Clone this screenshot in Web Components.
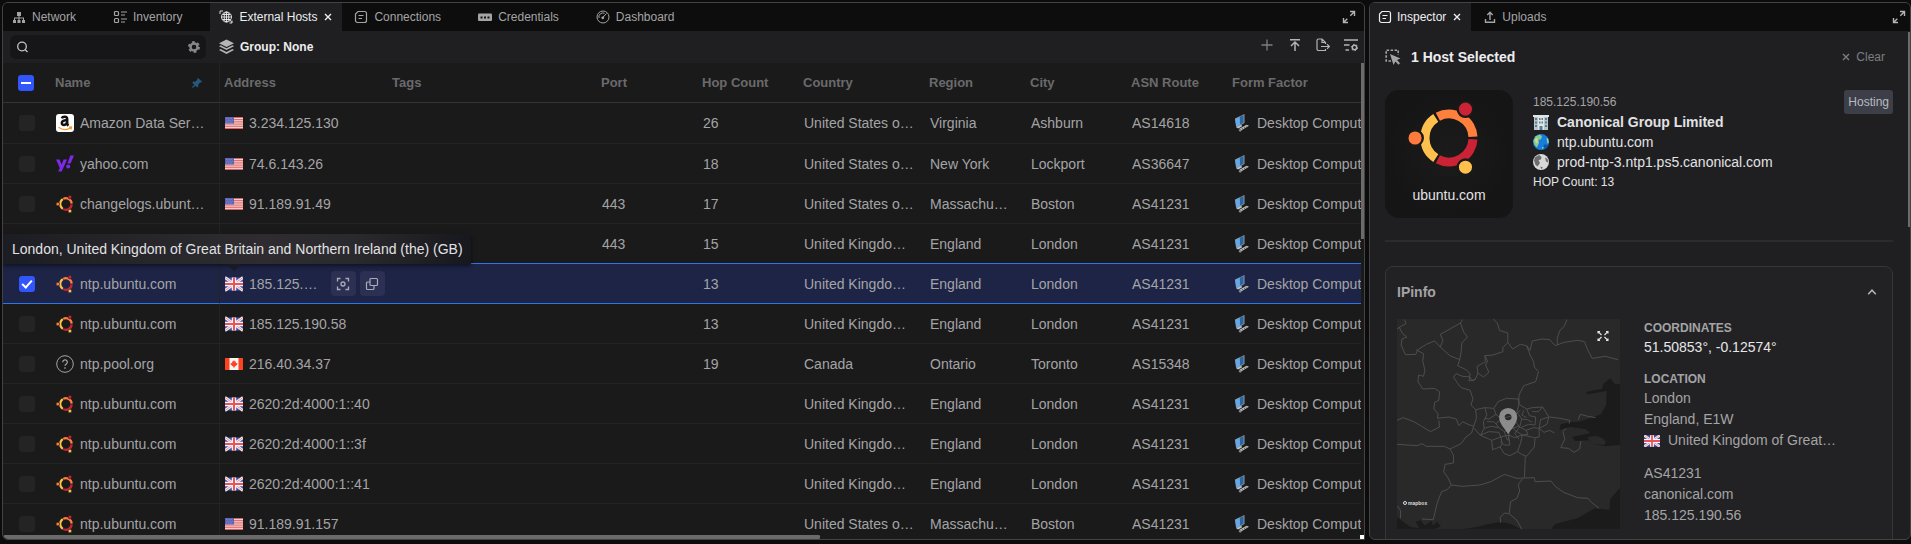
<!DOCTYPE html>
<html lang="en">
<head>
<meta charset="utf-8">
<title>External Hosts</title>
<style>
    html, body {
        margin: 0;
        height: 100%;
        background: #0c0c0c;
    }

    body {
        font-family: "Liberation Sans", Arial, sans-serif;
        font-size: 14px;
        color: #a4a4a6;
        overflow: hidden;
    }
</style>
</head>
<body>
<host-workspace></host-workspace>

<script>
    (function () {
        'use strict';

        const UBUNTU = `
            <g fill="none" stroke-width="27">
                <path stroke="#ff7f3c" d="M66.8 36.7A71.5 71.5 0 0 1 171.3 96"/>
                <path stroke="#cb2335" d="M171.3 104A71.5 71.5 0 0 1 66.8 163.3"/>
                <path stroke="#ffc04d" d="M60.7 159.8A71.5 71.5 0 0 1 60.7 40.2"/>
            </g>
            <g style="stroke:var(--cut,#1a1a1a)" stroke-width="7">
                <circle cx="149" cy="14" r="23" fill="#cb2335"/>
                <circle cx="-1" cy="100" r="23" fill="#ff7a3c"/>
                <circle cx="149" cy="187" r="23" fill="#ffc04d"/>
            </g>`;

        const ICONS = {
            network: ['0 0 14 14', '<g fill="currentColor"><path d="M5 2h4v4H5z"/><path d="M6.500 6h1v2h-1zM2 7.500h10v1H2zM2 8h1v2H2zM6.500 8h1v2h-1zM11 8h1v2h-1z"/><path d="M1 10h3v3H1zM5.500 10h3v3h-3zM10 10h3v3h-3z"/></g>'],
            inventory: ['0 0 14 14', '<g fill="none" stroke="currentColor" stroke-width="1.200"><rect x="1.500" y="1.500" width="4" height="4" rx="1"/><rect x="1.500" y="8.500" width="4" height="4" rx="1"/><path d="M8 2h6M8 5h4M8 9h6M8 12h4"/></g>'],
            globe: ['0 0 14 14', '<g fill="none" stroke="currentColor" stroke-width=".9"><circle cx="7.500" cy="7" r="5"/><ellipse cx="7.500" cy="7" rx="2.300" ry="5"/><path d="M2.500 7h10M3.500 4.500h8M3.500 9.500h8M7.500 2v10M1 4V1h3M13 10.500V13h-2.500M10 9l3 3.500"/></g>'],
            note: ['0 0 14 14', '<g fill="none" stroke="currentColor" stroke-width="1.200"><path d="M4 1.500h6.500a2 2 0 0 1 2 2v7a2 2 0 0 1-2 2h-7a2 2 0 0 1-2-2V4z"/><path d="M4.500 5.500h5M4.500 8.500h3.500"/></g>'],
            key: ['0 0 14 14', '<rect y="3.500" width="14" height="7.500" rx="1" fill="currentColor"/><path stroke="#111" stroke-width="2" stroke-dasharray="2 1.500" d="M2.500 7.500h9.500"/>'],
            gauge: ['0 0 14 14', '<g fill="none" stroke="currentColor"><circle cx="7" cy="7" r="6"/><path d="M3 8a4 4 0 0 1 5.500-4.700M6.500 7.800l4-4.300"/></g><circle cx="6.800" cy="7.800" r="1.400" fill="currentColor"/>'],
            upload: ['0 0 14 14', '<path fill="none" stroke="currentColor" stroke-width="1.400" d="M7 10V2.500M4.300 5L7 2.300 9.700 5M2.500 9v3.300h9V9"/>'],
            close: ['0 0 8 8', '<path fill="none" stroke="currentColor" stroke-width="1.400" d="M1 1l6 6M7 1L1 7"/>'],
            expand: ['0 0 14 14', '<path fill="none" stroke="currentColor" stroke-width="1.400" d="M8 1.500h4.500V6M12.300 1.700L8.300 5.700M1.500 8v4.500H6M1.700 12.300l3.600-3.600"/>'],
            search: ['0 0 14 14', '<g fill="none" stroke="currentColor" stroke-width="1.300"><circle cx="6" cy="6.500" r="4.300"/><path d="M9 9.500l2.500 2.500"/></g>'],
            gear: ['0 0 14 14', '<g fill="none" stroke="currentColor"><circle cx="7" cy="7" r="3.500" stroke-width="2.400"/><circle cx="7" cy="7" r="5" stroke-width="2" stroke-dasharray="2.600 2.636"/></g>'],
            layers: ['0 0 16 16', '<g fill="currentColor"><path d="M8 0l8 4-8 4-8-4z"/><path d="M1.700 6.200L8 9.300l6.300-3.100L16 7.100l-8 4-8-4z"/><path d="M1.700 10.200L8 13.300l6.300-3.100L16 11.100 8 15.500l-8-4.400z"/></g>'],
            plus: ['0 0 14 14', '<path stroke="currentColor" stroke-width="1.300" d="M7 1.500v11M1.500 7h11"/>'],
            top: ['0 0 14 14', '<path fill="none" stroke="currentColor" stroke-width="1.500" d="M2 1.700h10M7 13V5M3 8l4-4 4 4"/>'],
            export: ['0 0 14 14', '<path fill="none" stroke="currentColor" stroke-width="1.200" d="M9.500 11v1.500H2.500a1.500 1.500 0 0 1-1.500-1.500V2.500A1.500 1.500 0 0 1 2.500 1H6l3.500 3.500V6M6 1v3.500h3.500M5 8.500h8M11 6.200l2.300 2.300L11 10.800"/>'],
            columns: ['0 0 14 14', '<g fill="none" stroke="currentColor" stroke-width="1.400"><path d="M0 2h14M0 7h5.500M1.500 12H5"/><circle cx="10.500" cy="9.500" r="2.200" stroke-width="1.500"/><circle cx="10.500" cy="9.500" r="3.200" stroke-width="1" stroke-dasharray="1.300 2.050"/></g>'],
            pin: ['0 0 10 10', '<path fill="currentColor" d="M6 0l4 3.600-1 1-.8-.2-2 2.200.2 1.900-1.100.9L3.600 7.700.4 10l-.4-.4 2.200-3.200L.3 4.700l.9-1.100 2 .2 2.200-2L5 1z"/>'],
            select: ['0 0 16 16', '<path fill="none" stroke="currentColor" stroke-width="1.600" stroke-dasharray="2.500 1.500" d="M6 12H1.200V1.200h12V6"/><path fill="currentColor" d="M5 5l10.500 4.500-3.500 1.500 3 3.200-1.500 1.500-3.100-3.200L8.500 16z"/>'],
            up: ['0 0 10 6', '<path fill="none" stroke="currentColor" stroke-width="1.500" d="M1.200 5.200L5 1.200l3.800 4"/>'],
            focus: ['0 0 14 14', '<g fill="none" stroke="currentColor" stroke-width="1.300"><path d="M1.500 4.500v-3h3M9.500 1.500h3v3M12.500 9.500v3h-3M4.500 12.500h-3v-3"/><circle cx="7" cy="7" r="2"/></g>'],
            copy: ['0 0 14 14', '<g fill="none" stroke="currentColor" stroke-width="1.200"><rect x="5" y="1.500" width="7.500" height="7" rx="1"/><path d="M5 5H2.500a1 1 0 0 0-1 1v5.500a1 1 0 0 0 1 1H8a1 1 0 0 0 1-1v-3"/></g>'],
            spread: ['0 0 12 12', '<path fill="none" stroke="currentColor" stroke-width="1.100" d="M1 3.500V1.500h2M9 1.500h2v2M11 8.500v2H9M3 10.500H1v-2M1.500 2l3 3M10.500 2l-3 3M10.500 10l-3-3M1.500 10l3-3"/>'],
            question: ['0 0 18 18', '<g fill="none" stroke="#a4a4a6"><circle cx="9" cy="9" r="8.300"/><path stroke-width="1.300" d="M6.700 7.200a2.300 2.300 0 1 1 3.300 2.100c-.7.400-1 .7-1 1.500M9 12.200v1.500"/></g>'],
            'ubuntu-large': ['-25 -25 250 250', UBUNTU],
            ubuntu: ['-24 -12 224 224', UBUNTU],
            amazon: ['0 0 18 18', '<rect width="18" height="18" rx="3" fill="#fff"/><g fill="none" stroke="#111" stroke-width="2.500"><path d="M5.800 4.300c.8-2.300 5.400-2.300 5.400.8v4.500c0 1 .5 1.500 1.200 2.100M11 6.300C8 6 5.800 7 5.800 9c0 2.600 4.400 2.800 5.400-.8"/></g><path fill="none" stroke="#f8982c" stroke-width="1.300" d="M2.500 13.300c4 2.800 9 2.700 12.500.5M13 13.200l2.500-.2-.6 2.500"/>'],
            yahoo: ['0 0 18 18', '<path fill="#7d2ae8" d="M0 4.500h3.600l2 5 2-5h3.500L5.700 16.500H2.200L3.800 13z"/><path fill="#7d2ae8" d="M14.300.500H18l-3.500 8h-3z"/><circle cx="12.200" cy="11.500" r="2" fill="#7d2ae8"/>'],
            us: ['0 0 18 12', '<path fill="#f3e9ea" d="M0 0h18v12H0z"/><path stroke="#e1605f" stroke-width="1" d="M0 .5h18M0 2.400h18M0 4.200h18M0 6h18M0 7.900h18M0 9.700h18M0 11.500h18"/><path fill="#5a63b5" d="M0 0h9v6.500H0z"/><path stroke="#b0b3d8" stroke-width=".7" stroke-dasharray=".8 1" d="M1 1.300h7M1.800 3.200h6M1 5.100h7"/>'],
            gb: ['0 0 18 13', '<path fill="#4653a8" d="M0 0h18v13H0z"/><path stroke="#f1eff5" stroke-width="2.800" d="M0 0l18 13M18 0L0 13"/><path stroke="#e08890" stroke-width=".9" d="M0 0l18 13M18 0L0 13"/><path stroke="#f6f4f8" stroke-width="4.400" d="M9 0v13M0 6.500h18"/><path stroke="#ea5459" stroke-width="2" d="M9 0v13M0 6.500h18"/>'],
            ca: ['0 0 18 12', '<path fill="#f5f5f5" d="M0 0h18v12H0z"/><path fill="#fb4320" d="M0 0h4.500v12H0zM13.500 0H18v12h-4.500zM9 2l1 1.700 1-.4-.2 2 1.700-.3-.4 1.700-2.400 2.100H9.300V10h-.6V8.800H8.300L5.900 6.700 5.500 5l1.700.3-.2-2 1 .4z"/>'],
            desktop: ['0 0 18 18', '<path fill="#8e979d" d="M2 4.500L11.500 0v9L3.500 13.500z"/><path fill="#68a8e4" d="M2.200 5.200L7.500 2.500v8L3 12.700z"/><path fill="#2a67a5" d="M6.800 2.700L10.500.9v7.800L7 10.500z"/><path fill="#b5c3cb" d="M3.200 13.300l5-2.500 1 1.500-4 2.200z"/><path fill="#c4c4c2" d="M6 15l7.500-4.200 2.500 1L8 16.600z"/><path stroke="#4c4c4c" stroke-dasharray="1 1" d="M7.500 15.500l7-3.800"/><path fill="#8b8b8b" d="M5.500 16.200l1.500-.9 1.800 1.500L7 17.800z"/>'],
            building: ['0 0 16 16', '<path fill="#b7c4ca" d="M1 2.500h14V16H1z"/><path fill="#dfe4e4" d="M0 1h16v2H0zM5 3h6v13H5z"/><path fill="#5b7c8e" d="M2 4h2v2H2zM2 7.500h2v2H2zM2 11h2v2H2zM12 4h2v2h-2zM12 7.500h2v2h-2zM12 11h2v2h-2zM6 4h1.500v2H6zM8.500 4H10v2H8.500zM6 7.500h1.500v2H6zM8.500 7.500H10v2H8.500zM6.500 12h3v4h-3z"/>'],
            earth: ['0 0 16 16', '<circle cx="8" cy="8" r="8" fill="#167ddf"/><path fill="#8bc98e" d="M2.500 2.200L7 .6l2 2-1 2.700-2.500.7L6 9l-2 4.500L1.500 11 .3 7z"/><path fill="#c5dd8c" d="M1.500 6l2.500-2.500L5 7l-1 3z"/><path fill="#a4d793" d="M13.500 4l1.700.8.6 4-1.300 1zM9 13l3 .5-1 1.500-2-.5z"/><path fill="#0a57ad" d="M11 10.500l4.300.3a8 8 0 0 1-5 4.800z"/>'],
            moon: ['0 0 16 16', '<circle cx="8" cy="8" r="8" fill="#d8d8d8"/><path fill="#6d6d6d" d="M2 3.200L6 1l2.500 2L8 5.500 5.500 6 7 9l-2.500 3.500L2.500 11 1 6.500zM12 3.500l2.500 1.200.8 4L13 7.500zM7 12.500l3 1-1.500 1.500z"/>']
        };

        class UiIcon extends HTMLElement {
            connectedCallback() {
                if (this.shadowRoot) return;
                const [box, art] = ICONS[this.getAttribute('name')];
                this.attachShadow({mode: 'open'}).innerHTML = `
                <style>
                    :host { display: inline-block; width: 14px; height: 14px; flex: none; }
                    svg { display: block; width: 100%; height: 100%; overflow: hidden; }
                </style>
                <svg viewBox="${box}" aria-hidden="true">${art}</svg>`;
            }
        }
        customElements.define('ui-icon', UiIcon);

        // small helper: an element whose markup never changes after it is attached
        function define(tag, markup) {
            customElements.define(tag, class extends HTMLElement {
                constructor() {
                    super();
                    this.attachShadow({mode: 'open'}).innerHTML = markup;
                }
            });
        }

        define('dock-panel', `
            <style>
                :host {
                    display: flex;
                    flex-direction: column;
                    box-sizing: border-box;
                    min-width: 0;
                    border: 1px solid #434346;
                    border-radius: 6px;
                    background: #1f1f22;
                    overflow: hidden;
                }
                header {
                    display: flex;
                    justify-content: space-between;
                    flex: none;
                    height: 28px;
                    background: #0d0d0d;
                }
                nav { display: flex; gap: var(--tab-space, 3px); }
                button {
                    border: 0;
                    padding: 0 var(--end-pad, 8px) 0 0;
                    background: none;
                    color: #b4b4b6;
                    display: flex;
                    align-items: center;
                }
                main { display: flex; flex-direction: column; flex: 1; min-height: 0; position: relative; }
            </style>
            <header>
                <nav><slot name="tab"></slot></nav>
                <button aria-label="Maximize"><ui-icon name="expand"></ui-icon></button>
            </header>
            <main><slot></slot></main>`);

        define('dock-tab', `
            <style>
                :host {
                    display: flex;
                    align-items: center;
                    padding: 0 10px 0 var(--tab-pad, 9px);
                    font-size: 12px;
                    color: #a4a4a6;
                }
                :host([active]) { background: #1f1f22; color: #ededef; }
                button {
                    display: flex;
                    align-items: center;
                    gap: var(--tab-gap, 6px);
                    height: 28px;
                    padding: 0;
                    border: 0;
                    background: none;
                    font: inherit;
                    color: inherit;
                    white-space: nowrap;
                }
                .close { margin-left: 7px; visibility: hidden; }
                .close ui-icon { width: 8px; height: 8px; }
                :host([active]) .close { visibility: visible; }
            </style>
            <button><slot name="icon"></slot><slot></slot></button>
            <button class="close" aria-label="Close tab"><ui-icon name="close"></ui-icon></button>`);

        define('grid-toolbar', `
            <style>
                :host {
                    display: flex;
                    align-items: center;
                    flex: none;
                    height: 32px;
                    padding: 0 6px 0 7px;
                }
                label {
                    display: flex;
                    align-items: center;
                    box-sizing: border-box;
                    width: 196px;
                    height: 24px;
                    padding: 0 5px 0 6px;
                    border-radius: 6px;
                    background: #161618;
                    color: #c4c4c6;
                }
                input { flex: 1; min-width: 0; border: 0; outline: 0; background: none; color: inherit; font: inherit; font-size: 12px; }
                button { display: flex; align-items: center; padding: 0; border: 0; background: none; color: #b4b4b6; font: inherit; }
                label button { color: #87878a; }
                .group { gap: 6px; margin-left: 13px; font-size: 12px; font-weight: bold; color: #ededef; }
                .group ui-icon { width: 15px; height: 16px; color: #b4b4b6; }
                .actions { display: flex; gap: 14px; margin-left: auto; padding-bottom: 4px; }
                .actions button:first-child { color: #7f7f82; }
            </style>
            <label>
                <ui-icon name="search"></ui-icon>
                <input type="text" aria-label="Search hosts">
                <button aria-label="Search settings"><ui-icon name="gear"></ui-icon></button>
            </label>
            <button class="group"><ui-icon name="layers"></ui-icon>Group: None</button>
            <div class="actions">
                <button aria-label="Add"><ui-icon name="plus"></ui-icon></button>
                <button aria-label="Upload"><ui-icon name="top"></ui-icon></button>
                <button aria-label="Export"><ui-icon name="export"></ui-icon></button>
                <button aria-label="Columns"><ui-icon name="columns"></ui-icon></button>
            </div>`);

        // icon, name, flag, address, port, hops, country, region, city, asn
        const US = 'United States o…';
        const GB = 'United Kingdo…';
        const hosts = [
            ['amazon', 'Amazon Data Ser…', 'us', '3.234.125.130', '', '26', US, 'Virginia', 'Ashburn', 'AS14618'],
            ['yahoo', 'yahoo.com', 'us', '74.6.143.26', '', '18', US, 'New York', 'Lockport', 'AS36647'],
            ['ubuntu', 'changelogs.ubunt…', 'us', '91.189.91.49', '443', '17', US, 'Massachu…', 'Boston', 'AS41231'],
            ['', '', '', '', '443', '15', GB, 'England', 'London', 'AS41231'],
            ['ubuntu', 'ntp.ubuntu.com', 'gb', '185.125.…', '', '13', GB, 'England', 'London', 'AS41231'],
            ['ubuntu', 'ntp.ubuntu.com', 'gb', '185.125.190.58', '', '13', GB, 'England', 'London', 'AS41231'],
            ['question', 'ntp.pool.org', 'ca', '216.40.34.37', '', '19', 'Canada', 'Ontario', 'Toronto', 'AS15348'],
            ['ubuntu', 'ntp.ubuntu.com', 'gb', '2620:2d:4000:1::40', '', '', GB, 'England', 'London', 'AS41231'],
            ['ubuntu', 'ntp.ubuntu.com', 'gb', '2620:2d:4000:1::3f', '', '', GB, 'England', 'London', 'AS41231'],
            ['ubuntu', 'ntp.ubuntu.com', 'gb', '2620:2d:4000:1::41', '', '', GB, 'England', 'London', 'AS41231'],
            ['ubuntu', 'ntp.ubuntu.com', 'us', '91.189.91.157', '', '', US, 'Massachu…', 'Boston', 'AS41231']
        ];
        const selected = 4;

        const iconCell = (icon, text, extra = '') =>
            `<div class="cell">${icon ? `<ui-icon name="${icon}"></ui-icon>` : ''}<span>${text}</span>${extra}</div>`;

        customElements.define('host-grid', class extends HTMLElement {
            constructor() {
                super();
                this.attachShadow({mode: 'open'}).innerHTML = `
                <style>
                    :host {
                        display: block;
                        position: relative;
                        flex: 1;
                        min-height: 0;
                        background: #1a1a1a;
                        overflow: hidden;
                    }
                    .view { height: 100%; margin-right: 3px; overflow: hidden; }
                    table { table-layout: fixed; width: 1425px; border-collapse: separate; border-spacing: 0; }
                    th, td {
                        box-sizing: border-box;
                        height: 40px;
                        padding: 0 0 0 5px;
                        text-align: left;
                        white-space: nowrap;
                        overflow: hidden;
                        border-bottom: 1px solid #242426;
                    }
                    th { padding-left: 4px; font-size: 13px; color: #6a6a6c; border-color: #353537; }
                    tbody tr:first-child td { height: 41px; }
                    th:first-child { padding-left: 15px; }
                    td:first-child { padding-left: 16px; }
                    th:nth-child(2), td:nth-child(2) { border-right: 1px solid #232325; }
                    .head { display: flex; align-items: center; justify-content: space-between; padding-right: 17px; }
                    .head ui-icon { width: 10px; height: 10px; color: #25587f; }
                    .cell { display: flex; align-items: center; gap: 6px; }
                    .cell ui-icon { width: 18px; height: 18px; }
                    .selected td { background: #1d2446; --cut: #1d2446; }
                    .above td, .selected td { border-bottom-color: #2d76ea; }
                    input {
                        appearance: none;
                        display: block;
                        position: relative;
                        width: 16px;
                        height: 16px;
                        margin: 0;
                        border-radius: 3px;
                        background: #242425;
                    }
                    input:checked, input.some { background: #3156fb; }
                    input.some::after { content: ''; position: absolute; inset: 7px 3px; background: #fff; }
                    input:checked::after {
                        content: '';
                        position: absolute;
                        left: 5px;
                        top: 2px;
                        width: 4px;
                        height: 8px;
                        border: solid #fff;
                        border-width: 0 2px 2px 0;
                        transform: rotate(42deg);
                    }
                    .tools { display: flex; gap: 4px; margin-left: 7px; }
                    .tools button {
                        display: flex;
                        align-items: center;
                        justify-content: center;
                        width: 25px;
                        height: 25px;
                        padding: 0;
                        border: 0;
                        border-radius: 4px;
                        background: #2c3153;
                        color: #a9abb8;
                    }
                    .tools ui-icon { width: 14px; height: 14px; }
                    [role=tooltip] {
                        position: absolute;
                        left: 0;
                        top: 171px;
                        padding: 5px 8px 5px 9px;
                        line-height: 20px;
                        white-space: nowrap;
                        color: #e2e2e4;
                        background: linear-gradient(90deg, #1c1d22, #2e2c31 55%, #2a292e 75%, #17181d);
                        box-shadow: 0 2px 4px rgba(0, 0, 0, .5);
                    }
                    [role=tooltip]::after {
                        content: '';
                        position: absolute;
                        left: 224px;
                        top: 100%;
                        border: 7px solid transparent;
                        border-top-color: #191a22;
                        border-bottom: 0;
                    }
                    .bar-y, .bar-x, .corner { position: absolute; background: #6b6b6b; }
                    .bar-y { top: 0; right: 0; width: 3px; height: 37%; }
                    .bar-x { left: 0; bottom: 0; width: 60%; height: 4px; border-radius: 3px 2px 2px 3px; }
                    .corner { right: 0; bottom: 0; width: 4px; height: 4px; background: #fff; }
                </style>
                <div class="view">
                    <table>
                        <colgroup>
                            <col style="width:48px"><col style="width:169px"><col style="width:168px"><col style="width:209px">
                            <col style="width:101px"><col style="width:101px"><col style="width:126px"><col style="width:101px">
                            <col style="width:101px"><col style="width:101px"><col style="width:200px">
                        </colgroup>
                        <thead>
                            <tr>
                                <th><input type="checkbox" class="some" aria-label="Select all hosts"></th>
                                <th><div class="head">Name<ui-icon name="pin"></ui-icon></div></th>
                                <th>Address</th><th>Tags</th><th>Port</th><th>Hop Count</th><th>Country</th>
                                <th>Region</th><th>City</th><th>ASN Route</th><th>Form Factor</th>
                            </tr>
                        </thead>
                        <tbody></tbody>
                    </table>
                </div>
                <div role="tooltip">London, United Kingdom of Great Britain and Northern Ireland (the) (GB)</div>
                <div class="bar-y"></div>
                <div class="bar-x"></div>
                <div class="corner"></div>`;
                this._renderRows();
            }

            _renderRows() {
                const tools = `<div class="tools">
                    <button aria-label="Focus"><ui-icon name="focus"></ui-icon></button>
                    <button aria-label="Copy"><ui-icon name="copy"></ui-icon></button>
                </div>`;
                this.shadowRoot.querySelector('tbody').innerHTML = hosts.map((host, i) => {
                    const [icon, name, flag, address, ...rest] = host;
                    const state = i === selected ? 'selected' : i === selected - 1 ? 'above' : '';
                    return `<tr class="${state}">
                        <td><input type="checkbox" aria-label="Select host ${i + 1}" ${i === selected ? 'checked' : ''}></td>
                        <td>${iconCell(icon, name)}</td>
                        <td>${iconCell(flag, address, i === selected ? tools : '')}</td>
                        <td></td>
                        ${rest.map(text => `<td>${text}</td>`).join('')}
                        <td>${iconCell('desktop', 'Desktop Computer')}</td>
                    </tr>`;
                }).join('');
            }
        });

        define('host-summary', `
            <style>
                :host { display: flex; align-items: flex-start; padding-bottom: 22px; border-bottom: 2px solid #2b2b2d; }
                figure {
                    display: flex;
                    flex-direction: column;
                    align-items: center;
                    gap: 5px;
                    box-sizing: border-box;
                    width: 128px;
                    height: 128px;
                    margin: 0 20px 0 0;
                    padding-top: 6px;
                    border-radius: 14px;
                    background: radial-gradient(#1b1b1b, #151515 70%);
                    color: #e2e2e4;
                }
                figure ui-icon { width: 84px; height: 84px; --cut: #191919; }
                figcaption, p { line-height: 20px; }
                .facts { flex: 1; min-width: 0; padding-top: 2px; color: #e2e2e4; }
                p { display: flex; align-items: center; gap: 8px; margin: 0; }
                p ui-icon { width: 16px; height: 16px; }
                .small { font-size: 12px; }
                .muted { color: #a4a4a6; }
                .badge { padding: 2px 4px; border-radius: 3px; font-size: 12px; line-height: 20px; background: #3d3f48; color: #b9bac0; }
            </style>
            <figure><ui-icon name="ubuntu-large"></ui-icon><figcaption>ubuntu.com</figcaption></figure>
            <div class="facts">
                <p class="small muted">185.125.190.56</p>
                <p><ui-icon name="building"></ui-icon><b>Canonical Group Limited</b></p>
                <p><ui-icon name="earth"></ui-icon>ntp.ubuntu.com</p>
                <p><ui-icon name="moon"></ui-icon>prod-ntp-3.ntp1.ps5.canonical.com</p>
                <p class="small">HOP Count: 13</p>
            </div>
            <span class="badge">Hosting</span>`);

        define('location-map', `
            <style>
                :host { display: block; position: relative; width: 223px; height: 210px; flex: none; background: #292929; }
                svg { display: block; width: 100%; height: 100%; }
                button { position: absolute; top: 11px; right: 11px; padding: 0; border: 0; background: none; color: #e8e8e8; display: flex; }
                button ui-icon { width: 12px; height: 12px; }
                small { position: absolute; left: 6px; bottom: 22px; display: flex; align-items: center; gap: 1px; font-size: 5px; line-height: 8px; font-weight: bold; color: #ddd; }
                small::before { content: ''; width: 2px; height: 2px; border: 1px solid #ddd; border-radius: 50%; }
            </style>
            <svg viewBox="92 192 640 630" preserveAspectRatio="none" aria-hidden="true">
                <g fill="#1b1b1b">
                    <path d="M732 386L718 388 704 370 684 386 680 402 662 404 634 412 640 418 672 412 694 408 692 450 678 478 640 492 614 500 586 502 562 508 558 524 590 516 632 522 648 534 620 540 594 546 604 558 640 556 660 568 690 574 732 570z"/>
                    <path d="M732 698L704 732 702 764 660 760 610 790 570 800 546 808 534 822H732zM284 822L320 816 360 806 390 800 420 808 446 822zM92 786L110 800 130 816 156 820 146 800 160 796 172 812 190 798 196 812 206 800 218 814 200 822H92z"/>
                </g>
                <path fill="#292929" d="M638 546L664 542 682 550 692 562 686 570 660 568 646 560z"/>
                <g fill="none" stroke="#545454" stroke-width="2.500">
                    <path d="M92 222L106 212 118 206 114 194M98 216L108 236 120 246 106 252 104 270 112 290 116 299 146 298 152 284 176 268 200 258 216 276 244 302 272 314"/>
                    <path d="M216 276L224 256 216 238 244 222 274 204 280 194M274 204L284 232 294 246 278 264 276 290 272 314 266 332 290 344 302 356 300 366 310 378 316 372"/>
                    <path d="M146 284L168 296 166 318 172 346 168 364 154 360 152 380 166 402 200 400 214 410 212 436 200 442 198 462 210 476 208 490 240 486 262 492 270 512 280 500 296 508 312 514"/>
                    <path d="M368 192L380 204 386 226 410 234 410 262 396 278 396 290 368 300 344 302 346 320 322 334 324 356 316 374 298 378 302 366 280 364 262 356 254 366 264 382 276 398 302 406 310 432 304 450 318 464 320 490 312 514"/>
                    <path d="M344 302L352 318 346 330 356 352 340 366 324 354M410 262L424 282 446 268 464 272 474 286 480 258 508 252 530 254 546 272 572 262 610 256 630 260 640 286 652 310 690 304 726 314M580 194L572 214 560 226 552 248 552 270"/>
                    <path d="M464 272L474 300 484 320 486 336 498 350 490 380 456 392 442 420 442 448M92 496L110 488 140 500 160 512 188 530 214 516 212 496"/>
                    <path d="M92 568L150 572 164 566 176 574 228 574 244 582 276 566 290 546 306 534 312 514M244 582L254 600 254 624 230 628 226 650 238 668 248 690 236 704 220 710 208 742 196 794 164 792"/>
                    <path d="M248 690L280 694 330 690 362 680 400 658 436 670 486 668 488 680 534 678 546 694 570 712 610 728 640 730 650 742 672 760M460 604L458 668M452 672L440 688 444 708 436 730 418 740 414 776 436 796 450 822M414 776L400 774 388 788 390 804M92 752L102 766 102 790"/>
                    <path d="M318 464L344 458 370 460 382 440 406 430 440 432 442 448 464 462 480 458 510 456 528 486 522 508 500 520 500 546 488 548 486 576 464 604 450 598 438 590 416 602 400 596 388 576 366 584 364 556 330 540 314 520"/>
                    <path d="M344 458L350 480 340 500 342 520 332 540M370 460L376 478 356 492 344 490M376 478L392 492 410 486 430 480 446 466M442 448L436 470 450 492 444 516M464 462L472 482 490 486 488 510 470 508 450 516M510 456L498 470 480 470M528 486L504 494 500 520M342 520L362 514 384 518 400 530 414 524 440 514 462 526 484 518 500 520M332 540L356 530 384 532 390 546 412 540 430 548 452 540 486 548M364 556L390 546 394 566 388 576M412 540L416 570 400 570 388 560M452 540L446 566 438 590M414 524L412 552M430 480L432 500 444 516 430 536 442 552M392 492L376 506 384 518M350 500L368 500 376 506M450 492L466 494 480 502M456 466L450 480 464 488M400 530L408 554 416 556M420 508L430 526 452 540 468 538 462 526"/>
                    <path d="M530 486L560 490 588 496 586 506M500 520L514 532 530 526 544 534M578 520L568 530 574 552 562 578 584 580 600 592 616 582 620 558M612 494L618 478 640 484 662 488"/>
                </g>
                <path fill="#949494" fill-opacity=".92" fill-rule="evenodd" d="M411 538C404 522 385 508 385 485a26 26 0 0 1 52 0c0 23-19 37-26 53zM411 476a10 10 0 1 0 .1 0z"/>
            </svg>
            <button aria-label="Expand map"><ui-icon name="spread"></ui-icon></button>
            <small>mapbox</small>`);

        define('info-card', `
            <style>
                :host {
                    display: block;
                    margin-top: 24px;
                    padding: 0 11px;
                    border: 1px solid #363638;
                    border-radius: 8px;
                    background: #222224;
                }
                header { display: flex; align-items: center; justify-content: space-between; height: 50px; margin-bottom: 2px; }
                h2 { margin: 0; font-size: 14px; }
                header button { display: flex; padding: 0 4px; border: 0; background: none; color: #b4b4b6; }
                header ui-icon { width: 10px; height: 6px; }
                .body { display: flex; gap: 24px; padding-bottom: 24px; }
                dl { margin: 0; min-width: 0; }
                dt { font-size: 12px; line-height: 18px; font-weight: bold; }
                dd { display: flex; align-items: center; gap: 8px; margin: 0; line-height: 21px; white-space: nowrap; }
                dd.bright { color: #e6e6e8; }
                dd ui-icon { width: 16px; height: 12px; }
                .end { margin-bottom: 12px; }
            </style>
            <header><h2>IPinfo</h2><button aria-label="Collapse"><ui-icon name="up"></ui-icon></button></header>
            <div class="body">
                <location-map></location-map>
                <dl>
                    <dt>COORDINATES</dt>
                    <dd class="bright end">51.50853°, -0.12574°</dd>
                    <dt>LOCATION</dt>
                    <dd>London</dd>
                    <dd>England, E1W</dd>
                    <dd class="end"><ui-icon name="gb"></ui-icon>United Kingdom of Great…</dd>
                    <dd>AS41231</dd>
                    <dd>canonical.com</dd>
                    <dd>185.125.190.56</dd>
                </dl>
            </div>`);

        define('host-inspector', `
            <style>
                :host { display: block; position: relative; flex: 1; min-height: 0; padding: 16px 17px 0 15px; overflow: hidden; }
                header { display: flex; align-items: center; height: 20px; margin-bottom: 23px; }
                header > ui-icon { width: 16px; height: 16px; }
                h1 { flex: 1; margin: 0 0 0 10px; font-size: 14px; color: #ededef; }
                button { display: flex; align-items: center; gap: 6px; margin-right: 8px; padding: 0; border: 0; background: none; font: inherit; font-size: 12px; color: #7d7d80; }
                button ui-icon { width: 8px; height: 8px; }
                .bar { position: absolute; top: 1px; right: 0; width: 2px; height: 195px; background: #6b6b6b; }
            </style>
            <header>
                <ui-icon name="select"></ui-icon>
                <h1>1 Host Selected</h1>
                <button><ui-icon name="close"></ui-icon>Clear</button>
            </header>
            <host-summary></host-summary>
            <info-card></info-card>
            <div class="bar"></div>`);

        define('host-workspace', `
            <style>
                :host {
                    display: flex;
                    gap: 4px;
                    box-sizing: border-box;
                    height: 100vh;
                    padding: 2px 0 4px 2px;
                }
                .hosts { flex: 1; border-bottom-right-radius: 0; }
                .inspector { flex: none; width: 542px; --tab-pad: 8px; --tab-gap: 5px; --tab-space: 4px; --end-pad: 4px; }
            </style>
            <dock-panel class="hosts">
                <dock-tab slot="tab"><ui-icon slot="icon" name="network"></ui-icon>Network</dock-tab>
                <dock-tab slot="tab"><ui-icon slot="icon" name="inventory"></ui-icon>Inventory</dock-tab>
                <dock-tab slot="tab" active><ui-icon slot="icon" name="globe"></ui-icon>External Hosts</dock-tab>
                <dock-tab slot="tab"><ui-icon slot="icon" name="note"></ui-icon>Connections</dock-tab>
                <dock-tab slot="tab"><ui-icon slot="icon" name="key"></ui-icon>Credentials</dock-tab>
                <dock-tab slot="tab"><ui-icon slot="icon" name="gauge"></ui-icon>Dashboard</dock-tab>
                <grid-toolbar></grid-toolbar>
                <host-grid></host-grid>
            </dock-panel>
            <dock-panel class="inspector">
                <dock-tab slot="tab" active><ui-icon slot="icon" name="note"></ui-icon>Inspector</dock-tab>
                <dock-tab slot="tab"><ui-icon slot="icon" name="upload"></ui-icon>Uploads</dock-tab>
                <host-inspector></host-inspector>
            </dock-panel>`);
    })();
</script>
</body>
</html>
